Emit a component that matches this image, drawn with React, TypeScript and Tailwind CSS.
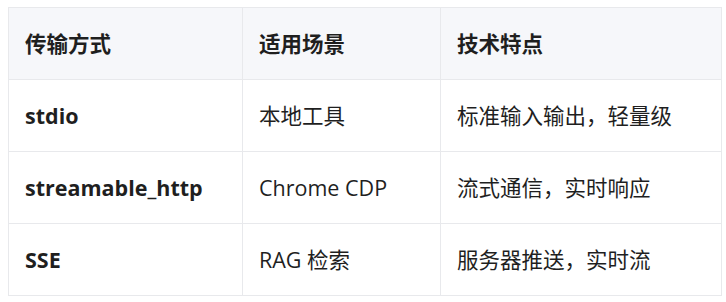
const rows = [
  ['stdio', '本地工具', '标准输入输出，轻量级'],
  ['streamable_http', 'Chrome CDP', '流式通信，实时响应'],
  ['SSE', 'RAG 检索', '服务器推送，实时流'],
];

const cell = 'border border-[#e8e9ec] px-4 text-left align-middle text-[21.5px] leading-[28px]';

export default function App() {
  return (
    <div
      className="bg-white pl-[8px] pt-[7px] text-[#1f1f1f]"
      style={{ fontFamily: '"Open Sans", "Noto Sans CJK SC", sans-serif' }}
    >
      <table className="w-[714px] border-collapse">
        <thead>
          <tr className="h-[72px] bg-[#f6f7fa]">
            <th className={`${cell} w-[234px] font-bold`}>传输方式</th>
            <th className={`${cell} w-[198px] font-bold`}>适用场景</th>
            <th className={`${cell} font-bold`}>技术特点</th>
          </tr>
        </thead>
        <tbody>
          {rows.map((r) => (
            <tr key={r[0]} className="h-[72px]">
              <td className={`${cell} font-bold`}>{r[0]}</td>
              <td className={`${cell} font-normal`}>{r[1]}</td>
              <td className={`${cell} font-normal`}>{r[2]}</td>
            </tr>
          ))}
        </tbody>
      </table>
    </div>
  );
}
